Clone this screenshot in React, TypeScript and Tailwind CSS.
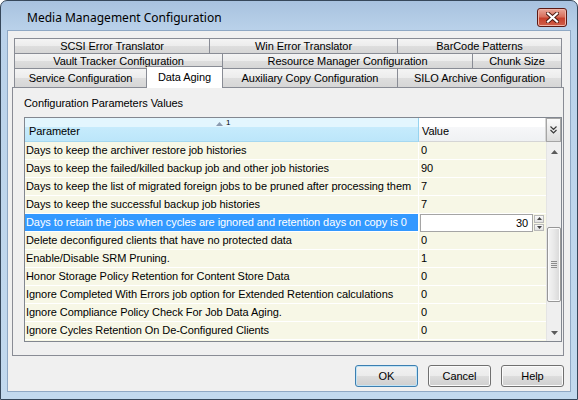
import React from 'react';

const rows: [string, string][] = [
    ['Days to keep the archiver restore job histories', '0'],
    ['Days to keep the failed/killed backup job and other job histories', '90'],
    ['Days to keep the list of migrated foreign jobs to be pruned after processing them', '7'],
    ['Days to keep the successful backup job histories', '7'],
    ['Days to retain the jobs when cycles are ignored and retention days on copy is 0', '30'],
    ['Delete deconfigured clients that have no protected data', '0'],
    ['Enable/Disable SRM Pruning.', '1'],
    ['Honor Storage Policy Retention for Content Store Data', '0'],
    ['Ignore Completed With Errors job option for Extended Retention calculations', '0'],
    ['Ignore Compliance Policy Check For Job Data Aging.', '0'],
    ['Ignore Cycles Retention On De-Configured Clients', '0'],
];

const SELECTED = 4;

const tabBg = 'bg-[linear-gradient(to_bottom,#f4f4f4_0%,#ececec_50%,#dedede_50%,#d6d6d6_100%)]';

const Tab = ({ label, width }: { label: string; width: string }) => (
    <div className={`${width} h-full shrink-0 flex items-center justify-center border-t border-r border-[#898c95] ${tabBg}`}>
        <span className="leading-[13px] whitespace-nowrap">{label}</span>
    </div>
);

const DialogButton = ({ label, primary }: { label: string; primary?: boolean }) => (
    <button
        className={`w-[63px] h-[22px] rounded-[3px] border flex items-center justify-center bg-[linear-gradient(to_bottom,#f2f2f2_0%,#ebebeb_50%,#dddddd_50%,#cfcfcf_100%)] ${primary
            ? 'border-[#3c7fb1] shadow-[inset_0_0_0_1px_#c2e4f6]'
            : 'border-[#707070] shadow-[inset_0_0_0_1px_#fbfbfb]'
            }`}
    >
        {label}
    </button>
);

const Arrow = ({ down }: { down?: boolean }) => (
    <svg width="7" height="4" viewBox="0 0 7 4">
        <path d={down ? 'M0 0 H7 L3.5 4 Z' : 'M0 4 H7 L3.5 0 Z'} fill="#5a5a5a" />
    </svg>
);

export default function App() {
    return (
        <div className="w-[578px] h-[400px] bg-white font-['Liberation_Sans',Arial,sans-serif] text-[11px] tracking-[-0.07px] text-black">
            <div className="w-full h-full rounded-t-[7px] border border-[#36475a] bg-[linear-gradient(to_bottom,#a8c2df_0px,#bad2ea_30px,#c2d9ee_100%)] flex flex-col">
                {/* Title bar */}
                <div className="h-[29px] shrink-0 flex items-start pl-[26px] pr-[10px]">
                    <span className="mt-[9px] leading-[16px] flex-1 font-['Noto_Sans',sans-serif] text-[12px] tracking-normal">
                        Media Management Configuration
                    </span>
                    <div className="mt-[7px] w-[30px] h-[19px] rounded-[3px] border border-[#5c1a14] bg-[linear-gradient(to_bottom,#e9a799_0%,#d8705d_45%,#c7402c_55%,#d0604a_100%)] shadow-[inset_0_0_0_1px_#f0b3a6] flex items-center justify-center">
                        <svg width="13" height="11" viewBox="0 0 13 11">
                            <path d="M2 1.5 L11 9.5 M11 1.5 L2 9.5" stroke="#4a1810" strokeWidth="4" strokeLinecap="square" />
                            <path d="M2 1.5 L11 9.5 M11 1.5 L2 9.5" stroke="#ffffff" strokeWidth="2.2" strokeLinecap="square" />
                        </svg>
                    </div>
                </div>

                {/* Client area */}
                <div className="mx-[6px] mb-[7px] flex-1 bg-[#f0f0f0] border border-[#8fa8c4] flex flex-col pt-[7px] pl-[4px] pr-[6px]">
                    {/* Tabs */}
                    <div className="ml-[2px] w-[548px] flex flex-col">
                        <div className="h-[15px] flex border-l border-[#898c95]">
                            <Tab label="SCSI Error Translator" width="w-[195px]" />
                            <Tab label="Win Error Translator" width="w-[188px]" />
                            <Tab label="BarCode Patterns" width="w-[164px]" />
                        </div>
                        <div className="h-[15px] flex border-l border-[#898c95]">
                            <Tab label="Vault Tracker Configuration" width="w-[208px]" />
                            <Tab label="Resource Manager Configuration" width="w-[250px]" />
                            <Tab label="Chunk Size" width="w-[89px]" />
                        </div>
                        <div className="h-[19px] flex items-start border-l border-[#898c95]">
                            <Tab label="Service Configuration" width="w-[132px]" />
                            <div className="relative -top-[2px] z-10 w-[76px] h-[22px] shrink-0 bg-white border-t border-r border-[#898c95] flex items-start justify-center pt-[4px]">
                                <span className="leading-[13px]">Data Aging</span>
                            </div>
                            <Tab label="Auxiliary Copy Configuration" width="w-[175px]" />
                            <Tab label="SILO Archive Configuration" width="w-[164px]" />
                        </div>
                    </div>

                    {/* Tab page */}
                    <div className="w-[552px] h-[269px] shrink-0 border border-[#898c95] bg-[#f0f0f0] pt-[8px] pl-[11px]">
                        <div className="h-[14px] mb-[7px] flex items-center">Configuration Parameters Values</div>

                        {/* Grid */}
                        <div className="w-[538px] h-[225px] border border-[#828790] bg-[#f7f7e6] flex flex-col">
                            {/* Header */}
                            <div className="h-[24px] shrink-0 flex">
                                <div className="relative w-[394px] shrink-0 border-r border-b border-r-[#96d3ef] border-b-[#a6d8f0] bg-[linear-gradient(to_bottom,#e3f6fe_0%,#e3f6fe_40%,#c6ebfc_40%,#bce6fa_100%)] flex items-end pb-[3px] pl-[4px]">
                                    <span className="leading-[13px]">Parameter</span>
                                    <div className="absolute left-[191px] top-[1px] flex items-start gap-[3px]">
                                        <svg width="7" height="4" viewBox="0 0 7 4" className="mt-[3px]">
                                            <path d="M0 4 H7 L3.5 0 Z" fill="#8b9bb0" />
                                        </svg>
                                        <span className="text-[8px] leading-[8px]">1</span>
                                    </div>
                                </div>
                                <div className="flex-1 border-r border-b border-[#d5d5d5] bg-[linear-gradient(to_bottom,#ffffff_0%,#ffffff_40%,#f6f7f9_40%,#eff1f3_100%)] flex items-end pb-[3px] pl-[3px]">
                                    <span className="leading-[13px]">Value</span>
                                </div>
                                <div className="w-[15px] shrink-0 border border-[#a5a5a5] bg-[linear-gradient(to_bottom,#fafafa,#dcdcdc)] flex items-center justify-center">
                                    <svg width="7" height="8" viewBox="0 0 7 8">
                                        <path d="M0.5 0.5 L3.5 3.5 L6.5 0.5 M0.5 4 L3.5 7 L6.5 4" stroke="#3a3a3a" strokeWidth="1.2" fill="none" />
                                    </svg>
                                </div>
                            </div>

                            {/* Body */}
                            <div className="flex-1 flex min-h-0">
                                <div className="flex-1 flex flex-col">
                                    {rows.map(([name, value], i) => (
                                        <div key={name} className="h-[18px] shrink-0 flex">
                                            <div
                                                className={`w-[394px] shrink-0 border-r border-b border-white pl-[1px] flex items-center whitespace-nowrap overflow-hidden ${i === SELECTED ? 'bg-[#3399ff] text-white' : ''
                                                    }`}
                                            >
                                                {name}
                                            </div>
                                            {i === SELECTED ? (
                                                <div className="flex-1 flex items-stretch pl-[1px]">
                                                    <div className="w-[113px] border border-[#a5a5a5] bg-white flex items-center justify-end pr-[4px]">
                                                        30
                                                    </div>
                                                    <div className="w-[10px] ml-[1px] flex flex-col gap-[1px] py-[1px]">
                                                        <div className="flex-1 border border-[#b9b9b9] bg-[linear-gradient(to_bottom,#f8f8f8,#e2e2e2)] flex items-center justify-center">
                                                            <svg width="5" height="3" viewBox="0 0 5 3"><path d="M0 3 H5 L2.5 0 Z" fill="#444" /></svg>
                                                        </div>
                                                        <div className="flex-1 border border-[#b9b9b9] bg-[linear-gradient(to_bottom,#f8f8f8,#e2e2e2)] flex items-center justify-center">
                                                            <svg width="5" height="3" viewBox="0 0 5 3"><path d="M0 0 H5 L2.5 3 Z" fill="#444" /></svg>
                                                        </div>
                                                    </div>
                                                </div>
                                            ) : (
                                                <div className="flex-1 border-b border-white pl-[2px] flex items-center">{value}</div>
                                            )}
                                        </div>
                                    ))}
                                </div>

                                {/* Scrollbar */}
                                <div className="w-[15px] shrink-0 bg-[#efefef] border-l border-[#e4e4e4] flex flex-col">
                                    <div className="h-[19px] shrink-0 flex items-center justify-center">
                                        <Arrow />
                                    </div>
                                    <div className="flex-1">
                                        <div className="mt-[66px] h-[75px] rounded-[2px] border border-[#979797] bg-[linear-gradient(to_right,#f4f4f4,#e8e8e8_50%,#d8d8d8)] shadow-[inset_0_0_0_1px_#fbfbfb] flex flex-col items-center justify-center gap-[1px]">
                                            <div className="w-[6px] h-[1px] bg-[#8c8c8c]" />
                                            <div className="w-[6px] h-[1px] bg-[#8c8c8c]" />
                                            <div className="w-[6px] h-[1px] bg-[#8c8c8c]" />
                                            <div className="w-[6px] h-[1px] bg-[#8c8c8c]" />
                                        </div>
                                    </div>
                                    <div className="h-[17px] shrink-0 flex items-center justify-center">
                                        <Arrow down />
                                    </div>
                                </div>
                            </div>
                        </div>
                    </div>

                    {/* Buttons */}
                    <div className="mt-[9px] flex justify-end gap-[10px]">
                        <DialogButton label="OK" primary />
                        <DialogButton label="Cancel" />
                        <DialogButton label="Help" />
                    </div>
                </div>
            </div>
        </div>
    );
}
